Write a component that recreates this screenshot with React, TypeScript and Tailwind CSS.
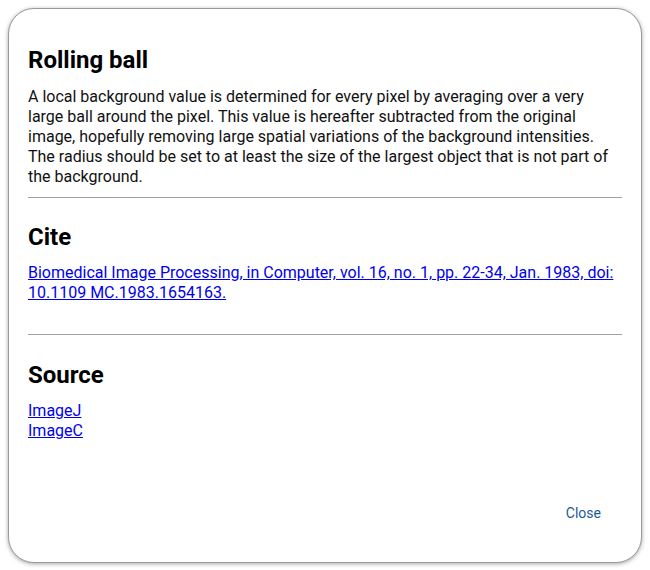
import React from 'react';

const font = { fontFamily: 'Roboto, "Liberation Sans", sans-serif' };

export default function App() {
  return (
    <div className="w-[650px] h-[570px] bg-white p-[8px]" style={font}>
      <div className="flex flex-col h-[555px] rounded-[26px] border border-[#9a9a9a] bg-white shadow-[0_1px_4px_rgba(0,0,0,0.35)] px-[19px] pt-[37px] text-black">
        {/* About */}
        <h2 className="text-[24px] font-bold leading-[28px]">Rolling ball</h2>
        <p className="mt-[13px] text-[16px] leading-[20px] text-[#111]">
          A local background value is determined for every pixel by averaging over a very large ball around the pixel. This value is hereafter subtracted from the original image, hopefully removing large spatial variations of the background intensities. The radius should be set to at least the size of the largest object that is not part of the background.
        </p>
        <hr className="mt-[10px] border-t border-[#a0a0a0]" />

        <h2 className="mt-[25px] text-[24px] font-bold leading-[28px]">Cite</h2>
        <div className="mt-[12px] text-[16px] leading-[20px]">
          <a href="#" className="text-[#0000ee] underline">
            Biomedical Image Processing, in Computer, vol. 16, no. 1, pp. 22-34, Jan. 1983, doi: 10.1109 MC.1983.1654163.
          </a>
        </div>
        <hr className="mt-[31px] border-t border-[#a0a0a0]" />

        <h2 className="mt-[26px] text-[24px] font-bold leading-[28px]">Source</h2>
        <div className="mt-[12px] flex flex-col items-start text-[16px] leading-[20px]">
          <a href="#" className="text-[#0000ee] underline">ImageJ</a>
          <a href="#" className="text-[#0000ee] underline">ImageC</a>
        </div>

        <div className="mt-auto mb-[35px] mr-[9px] flex justify-end">
          <button className="px-[12px] py-[4px] text-[14px] leading-[20px] text-[#1b5a96]">Close</button>
        </div>
      </div>
    </div>
  );
}
